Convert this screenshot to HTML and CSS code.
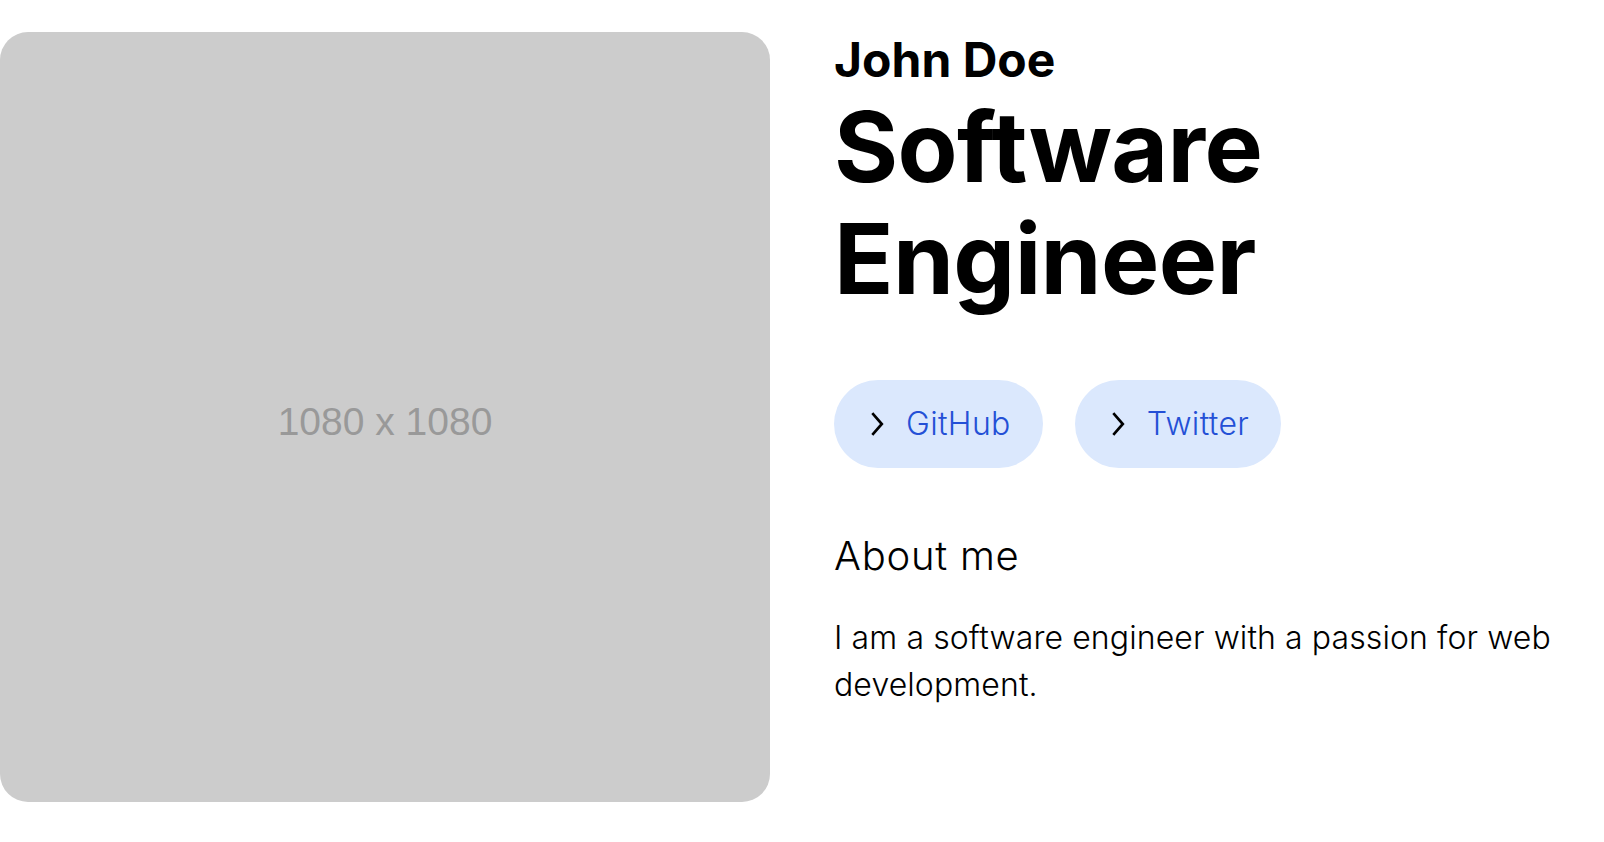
FILE: index.html
```html
<!DOCTYPE html>
<html lang="en">
<head>
<meta charset="utf-8">
<title>John Doe</title>
<link rel="stylesheet" href="styles.css">
</head>
<body>
<main class="page">
  <div class="photo"><span class="photo-label">1080 x 1080</span></div>
  <section class="info">
    <h2 class="name">John Doe</h2>
    <h1 class="title">Software Engineer</h1>
    <div class="links">
      <a class="pill" href="#">
        <svg class="chev" viewBox="0 0 24 24" width="24" height="24" aria-hidden="true"><path d="M6.3 1.2 L15.8 12 L6.3 22.8" fill="none" stroke="#000" stroke-width="2.7"/></svg>
        <span>GitHub</span>
      </a>
      <a class="pill" href="#">
        <svg class="chev" viewBox="0 0 24 24" width="24" height="24" aria-hidden="true"><path d="M6.3 1.2 L15.8 12 L6.3 22.8" fill="none" stroke="#000" stroke-width="2.7"/></svg>
        <span>Twitter</span>
      </a>
    </div>
    <h3 class="about">About me</h3>
    <p class="bio">I am a software engineer with a passion for web development.</p>
  </section>
</main>
</body>
</html>
```
FILE: styles.css
```css
html, body {
  margin: 0;
  padding: 0;
  background: #fff;
}
body {
  font-family: Inter, "Noto Sans", sans-serif;
  color: #000;
}
.page {
  display: grid;
  grid-template-columns: 770px 1fr;
  column-gap: 64px;
  padding-top: 32px;
  align-items: start;
}
.photo {
  width: 770px;
  height: 770px;
  background: #cccccc;
  border-radius: 28px;
  display: flex;
  align-items: center;
  justify-content: center;
}
.photo-label {
  font-family: "Liberation Sans", Arial, sans-serif;
  font-size: 39px;
  color: #999999;
  margin-top: 9px;
}
.info {
  display: flex;
  flex-direction: column;
  align-items: flex-start;
}
.name {
  margin: 0;
  font-size: 48px;
  line-height: 1.15;
  font-weight: 700;
}
.title {
  margin: 4px 0 0;
  font-size: 98px;
  line-height: 112px;
  font-weight: 700;
  letter-spacing: -0.6px;
}
.links {
  display: flex;
  gap: 32px;
  margin-top: 65px;
}
.pill {
  display: flex;
  align-items: center;
  gap: 16px;
  padding: 24px 32px;
  background: #dbe8fd;
  border-radius: 9999px;
  text-decoration: none;
  color: #2450d6;
  font-size: 32px;
  line-height: 40px;
  font-weight: 300;
  letter-spacing: 0.35px;
}
.chev {
  display: block;
  flex: none;
}
.about {
  margin: 64px 0 0;
  font-size: 40px;
  line-height: 48px;
  font-weight: 300;
  letter-spacing: 0.75px;
}
.bio {
  margin: 34px 0 0;
  font-size: 32px;
  line-height: 47px;
  font-weight: 300;
  letter-spacing: 0.1px;
  max-width: 770px;
}
```
